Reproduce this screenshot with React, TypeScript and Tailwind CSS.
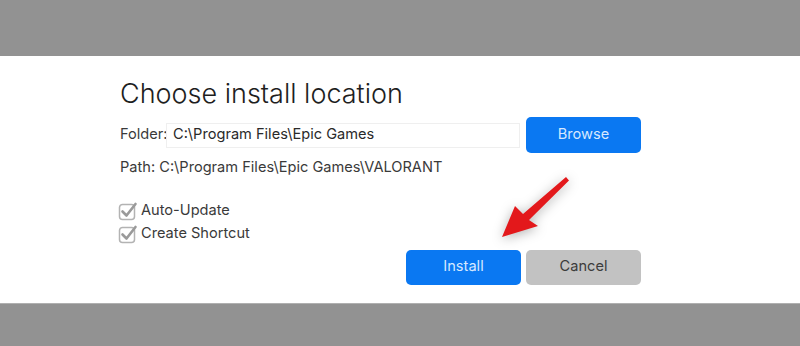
function CheckIcon() {
  return (
    <svg width="20" height="20" viewBox="0 0 20 20" className="shrink-0">
      <rect x="1.5" y="3.5" width="15" height="15" rx="3" fill="#fff" stroke="#b3b3b3" strokeWidth="1.5" />
      <path d="M4.5 10.5 L8.5 14.5 L17.5 3" fill="none" stroke="#9a9a9a" strokeWidth="2.6" strokeLinecap="round" strokeLinejoin="round" />
    </svg>
  );
}

export default function App() {
  return (
    <div className="relative flex h-[346px] w-[800px] flex-col overflow-hidden bg-[#929292] font-['Inter','Liberation_Sans',sans-serif]">
      <div className="h-[56px] shrink-0 bg-[#929292]" />
      <div className="flex h-[247px] shrink-0 flex-col bg-white pl-[120px] pr-[159px] pt-[20px]">
        <h1 className="text-[27px] font-light leading-[36px] text-[#1e1e1e]">Choose install location</h1>
        <div className="mt-[5px] flex items-center">
          <span className="w-[46px] text-[14.6px] text-[#3a3a3a]">Folder:</span>
          <div className="flex h-[25px] w-[354px] items-center border border-[#efefef] pl-[6px] text-[14.6px] text-[#2a2a2a]">
            C:\Program Files\Epic Games
          </div>
          <button className="ml-[6px] h-[36px] w-[115px] rounded-[5px] bg-[#0a78f2] text-[14.6px] text-[#d6e8ff]">Browse</button>
        </div>
        <div className="mt-[4px] text-[14.6px] text-[#3a3a3a]">Path: C:\Program Files\Epic Games\VALORANT</div>
        <div className="mt-[21px] flex flex-col gap-[1px]">
          <div className="-ml-[2px] flex items-center gap-[3px] text-[14.6px] text-[#3a3a3a]">
            <CheckIcon />
            <span>Auto-Update</span>
          </div>
          <div className="-ml-[2px] flex items-center gap-[3px] text-[14.6px] text-[#3a3a3a]">
            <CheckIcon />
            <span>Create Shortcut</span>
          </div>
        </div>
        <div className="mt-[5px] flex justify-end gap-[5px]">
          <button className="h-[35px] w-[115px] rounded-[5px] bg-[#0a78f2] text-[14.6px] text-[#d6e8ff]">Install</button>
          <button className="h-[35px] w-[115px] rounded-[5px] bg-[#c2c2c2] text-[14.6px] text-[#3c3c3c]">Cancel</button>
        </div>
      </div>
      <div className="flex-1 border-t border-[#b0b0b0] bg-[#929292]" />
      <svg
        className="absolute left-[495px] top-[172px] drop-shadow-[0_2px_6px_rgba(0,0,0,0.3)]"
        width="80"
        height="72"
        viewBox="0 0 80 72"
      >
        <path d="M7 65 L20 34 L28 42 L71 5 L74 8.5 L34 48 L43 54 Z" fill="#e3181b" />
      </svg>
    </div>
  );
}
